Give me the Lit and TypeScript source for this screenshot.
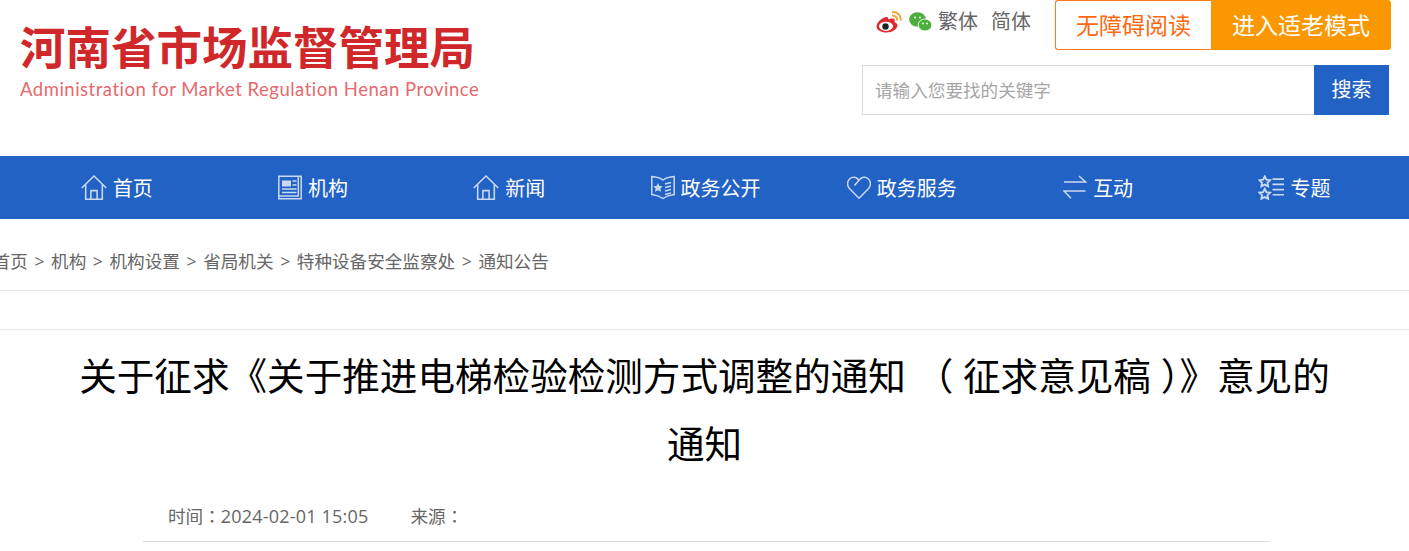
import { LitElement, html, css, svg } from 'lit';
import { customElement } from 'lit/decorators.js';

const icons: Record<string, unknown> = {
    home: svg`<path d="M.7 12.500 12.500 1l11.800 11.500M4.500 9v14.300h16V9M9.500 23.300V15h6v8.300"/>`,
    org: svg`<path d="M.8.800h22.400v22.400H.8zM20.300 1v19.500H1"/><path d="M4 5h9v6H4z" fill="currentColor" stroke="none"/><path d="M14.500 5.500h4M14.500 9.500h4M4 13.500h14.500M4 17h14.500"/>`,
    gov: svg`<path d="M.8 1c4 .3 8 1.200 11.200 3.500C15.200 2.200 19.200 1.300 23.200 1v18c-4 .5-8 1.800-11.200 4-3.200-2.200-7.200-3.500-11.200-4z"/><path d="M14 8.500l6-1.500M14 12l6-1.500M14 15.500l6-1.500M14 19l6-1.500"/><path d="M7 7.500l1.500 2.900 3.200.4-2.300 2.200.6 3.200L7 14.700l-3 1.500.6-3.200-2.300-2.200 3.200-.4z" fill="currentColor" stroke="none"/>`,
    heart: svg`<path d="M12 22.800 2.400 13C-.2 10.300 0 5.600 2.800 3.200 5.800.7 9.500 1.500 12 4.800L7.500 10M12 22.800l9.600-9.800c2.600-2.700 2.400-7.400-.4-9.800C18.200.7 14.500 1.500 12 4.800"/>`,
    swap: svg`<path d="M1 6.500h21.500L16 .5M22.500 15.500H1L8 22.800"/>`,
    topic: svg`<path stroke-width="1.800" d="M6.500 1.200l1.600 3.200 3.500.5-2.500 2.500.6 3.400-3.200-1.600-3.200 1.600.6-3.400L1.400 4.900l3.500-.5zM6.500 13.200l1.600 3.200 3.500.5-2.500 2.500.6 3.400-3.200-1.600-3.200 1.600.6-3.400-2.500-2.500 3.500-.5z"/><path stroke-width="1.600" d="M14 4h11M14 9h11M14 14h11M14 19h11"/>`,
};

const navItems = [
    { icon: 'home', label: '首页' },
    { icon: 'org', label: '机构' },
    { icon: 'home', label: '新闻' },
    { icon: 'gov', label: '政务公开' },
    { icon: 'heart', label: '政务服务' },
    { icon: 'swap', label: '互动' },
    { icon: 'topic', label: '专题' },
];

const crumbs = ['首页', '机构', '机构设置', '省局机关', '特种设备安全监察处', '通知公告'];

@customElement('app-root')
export class AppRoot extends LitElement {
    static styles = css`
        :host {
            display: block;
            height: 551px;
            overflow: hidden;
            background: #fff;
            font-family: "Open Sans", "Noto Sans CJK SC", sans-serif;
            color: #666;
        }

        .header {
            height: 156px;
            box-sizing: border-box;
            display: flex;
            justify-content: space-between;
            padding: 0 18px 0 20px;
        }

        .logo {
            padding-top: 18px;
        }

        .logo-name {
            font-size: 45.500px;
            line-height: 58px;
            font-weight: 700;
            color: #d0282a;
            white-space: nowrap;
        }

        .logo-en {
            font-family: Lato, sans-serif;
            font-size: 18.500px;
            line-height: 26px;
            letter-spacing: 0.500px;
            color: #e8686c;
            white-space: nowrap;
        }

        .tools {
            display: flex;
            flex-direction: column;
            align-items: flex-end;
            gap: 15px;
        }

        .tools-top {
            display: flex;
            align-items: flex-start;
        }

        .social {
            display: flex;
            align-items: center;
            margin-top: 11px;
            font-size: 20px;
            line-height: 22px;
            margin-right: 24px;
        }

        .social svg {
            display: block;
        }

        .social .weibo {
            margin-right: 7px;
        }

        .social .wechat {
            margin-right: 6px;
        }

        .social span {
            margin-right: 13px;
        }

        .social span:last-child {
            margin-right: 0;
        }

        .btn {
            height: 50px;
            box-sizing: border-box;
            line-height: 50px;
            font-size: 23px;
            text-align: center;
        }

        .btn-plain {
            width: 156px;
            border: 1px solid #fb7a1c;
            border-right: none;
            border-radius: 3px 0 0 3px;
            line-height: 48px;
            color: #fb6a10;
        }

        .btn-old {
            width: 180px;
            background: #fb9801;
            border-radius: 0 3px 3px 0;
            color: #fff;
        }

        .search {
            display: flex;
            height: 50px;
            margin-right: 2px;
        }

        .search-input {
            width: 452px;
            box-sizing: border-box;
            border: 1px solid #ddd;
            border-right: none;
            padding-left: 12px;
            line-height: 48px;
            font-size: 17.600px;
            color: #a5a5a5;
        }

        .search-btn {
            width: 75px;
            background: #2262c5;
            color: #fff;
            font-size: 20px;
            line-height: 50px;
            text-align: center;
        }

        .nav {
            height: 63px;
            background: #2262c5;
            display: grid;
            grid-template-columns: repeat(7, 196.300px);
            padding-left: 18.500px;
        }

        .nav-item {
            display: flex;
            align-items: center;
            justify-content: center;
            gap: 6px;
            color: #fff;
            font-size: 20px;
            white-space: nowrap;
        }

        .nav-item svg {
            display: block;
            height: 25px;
            fill: none;
            stroke: currentColor;
            stroke-width: 1.500;
            color: #c9d9f1;
        }

        .crumbs {
            height: 72px;
            box-sizing: border-box;
            border-bottom: 1px solid #e6e6e6;
            padding-top: 30px;
            font-size: 17.600px;
            line-height: 24px;
            white-space: nowrap;
            text-indent: -7.400px;
        }

        .crumbs i {
            font-style: normal;
            margin: 0 6.600px;
        }

        .spacer {
            height: 39px;
            box-sizing: border-box;
            border-bottom: 1px solid #e6e6e6;
        }

        .title {
            max-width: 1280px;
            margin: 12px auto 0;
            font-size: 37.600px;
            line-height: 68px;
            font-weight: 400;
            color: #000;
            text-align: center;
        }

        .article {
            width: 1126px;
            margin-left: 143px;
        }

        .meta {
            display: flex;
            height: 64px;
            box-sizing: border-box;
            border-bottom: 1px solid #ddd;
            padding: 26px 0 0 25px;
            font-size: 17.600px;
            line-height: 24px;
            gap: 42px;
        }

        .colon {
            font-family: "Noto Sans CJK TC", sans-serif;
        }

        .date {
            font-size: 18px;
            letter-spacing: 0.200px;
        }
    `;

    render() {
        return html`
            <div class="header">
                <div class="logo">
                    <div class="logo-name">河南省市场监督管理局</div>
                    <div class="logo-en">Administration for Market Regulation Henan Province</div>
                </div>
                <div class="tools">
                    <div class="tools-top">
                        <div class="social">
                            <svg class="weibo" width="26" height="22" viewBox="0 0 26 22">
                                <path d="M10 6C5 7.500.5 11.500.5 15.500c0 3.500 4.500 6 10 6 6 0 11-3.500 11-7 0-2-1.800-3-3-3.300.8-2 .3-3.700-2-3.700-1.500 0-3 .6-4 1C12.500 7 12 5.500 10 6z" fill="#dc2a2e"/>
                                <ellipse cx="10" cy="15.300" rx="7" ry="4.600" fill="#fff"/>
                                <circle cx="9.500" cy="15.500" r="3.200" fill="#222"/>
                                <path d="M16 4.500c3-.5 5.500 2 5 5M16 1.200c5.500-.8 9.500 3.500 8.500 8.300" fill="none" stroke="#f2a33a" stroke-width="2"/>
                            </svg>
                            <svg class="wechat" width="23" height="20" viewBox="0 0 23 20">
                                <ellipse cx="8.500" cy="7.500" rx="8.300" ry="7.300" fill="#4cae3c"/>
                                <ellipse cx="16" cy="13" rx="6.800" ry="6" fill="#4cae3c" stroke="#fff" stroke-width="0.900"/>
                                <circle cx="6" cy="5.500" r="1" fill="#fff"/>
                                <circle cx="11" cy="5.500" r="1" fill="#fff"/>
                                <circle cx="14" cy="11.500" r="0.900" fill="#fff"/>
                                <circle cx="18" cy="11.500" r="0.900" fill="#fff"/>
                            </svg>
                            <span>繁体</span>
                            <span>简体</span>
                        </div>
                        <div class="btn btn-plain">无障碍阅读</div>
                        <div class="btn btn-old">进入适老模式</div>
                    </div>
                    <div class="search">
                        <div class="search-input">请输入您要找的关键字</div>
                        <div class="search-btn">搜索</div>
                    </div>
                </div>
            </div>
            <div class="nav">
                ${navItems.map((item) => html`
                    <div class="nav-item">
                        <svg width="${item.icon === 'topic' ? 26 : item.icon === 'home' ? 26 : 24}" viewBox="0 0 ${item.icon === 'topic' || item.icon === 'home' ? 25 : 24} 24">${icons[item.icon]}</svg>
                        <span>${item.label}</span>
                    </div>
                `)}
            </div>
            <div class="crumbs">
                ${crumbs.map((c, i) => html`${i > 0 ? html`<i>&gt;</i>` : ''}${c}`)}
            </div>
            <div class="spacer"></div>
            <h1 class="title">关于征求《关于推进电梯检验检测方式调整的通知 （ 征求意见稿 ）》意见的通知</h1>
            <div class="article">
                <div class="meta">
                    <span>时间<span class="colon">：</span><span class="date">2024-02-01 15:05</span></span>
                    <span>来源<span class="colon">：</span></span>
                </div>
            </div>
        `;
    }
}
